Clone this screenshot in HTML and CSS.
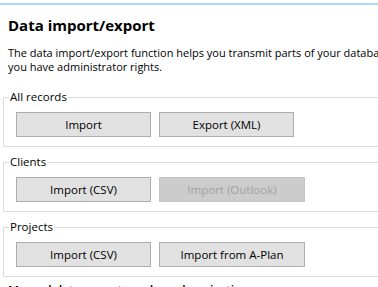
FILE: index.html
```html
<!DOCTYPE html>
<html>
<head>
<meta charset="utf-8">
<link rel="stylesheet" href="styles.css">
</head>
<body>
<div class="topline"></div>
<main class="page">
  <h1 class="title">Data import/export</h1>
  <p class="intro">The data import/export function helps you transmit parts of your database to other systems if<br>you have administrator rights.</p>
  <fieldset class="group">
    <legend class="group-label">All records</legend>
    <div class="row">
      <button class="btn btn-a">Import</button>
      <button class="btn btn-b">Export (XML)</button>
    </div>
  </fieldset>
  <fieldset class="group">
    <legend class="group-label">Clients</legend>
    <div class="row">
      <button class="btn btn-a">Import (CSV)</button>
      <button class="btn btn-c" disabled>Import (Outlook)</button>
    </div>
  </fieldset>
  <fieldset class="group">
    <legend class="group-label">Projects</legend>
    <div class="row">
      <button class="btn btn-a">Import (CSV)</button>
      <button class="btn btn-c">Import from A-Plan</button>
    </div>
  </fieldset>
  <p class="more">Manual data exports and synchronisation</p>
</main>
</body>
</html>
```

FILE: styles.css
```css
html, body {
  margin: 0;
  padding: 0;
  background: #ffffff;
  overflow: hidden;
}
body {
  font-family: "Open Sans", "Noto Sans", sans-serif;
  font-size: 11px;
  color: #000000;
}
.topline {
  margin-top: 3px;
  height: 2px;
  background: #a6dcf4;
}
.page {
  padding: 0 0 0 8px;
}
.title {
  margin: 10px 0 0 0;
  font-size: 15px;
  line-height: 20px;
  font-weight: 700;
}
.intro {
  margin: 11px 0 0 0;
  line-height: 14px;
  white-space: nowrap;
}
.group {
  margin: 16px -30px 0 -5px;
  padding: 8px 0 9px 12px;
  border: 1px solid #dcdcdc;
}
.group + .group {
  margin-top: 8px;
}
.group-label {
  padding: 0 1px;
  margin-left: -7px;
  line-height: 14px;
  font-size: 11.5px;
}
.row {
  display: flex;
  gap: 8px;
}
.btn {
  box-sizing: border-box;
  height: 25px;
  margin: 0;
  padding: 0;
  border: 1px solid #adadad;
  background: #e1e1e1;
  font-family: inherit;
  font-size: 11.5px;
  color: #000000;
  text-align: center;
}
.btn-a { width: 135px; }
.btn-b { width: 135px; }
.btn-c { width: 146px; }
.btn:disabled {
  background: #cccccc;
  border-color: #c4c4c4;
  color: #a2a2a2;
}
.more {
  margin: 6px 0 0 0;
  font-weight: 600;
  font-size: 12px;
  line-height: 16px;
}
```
